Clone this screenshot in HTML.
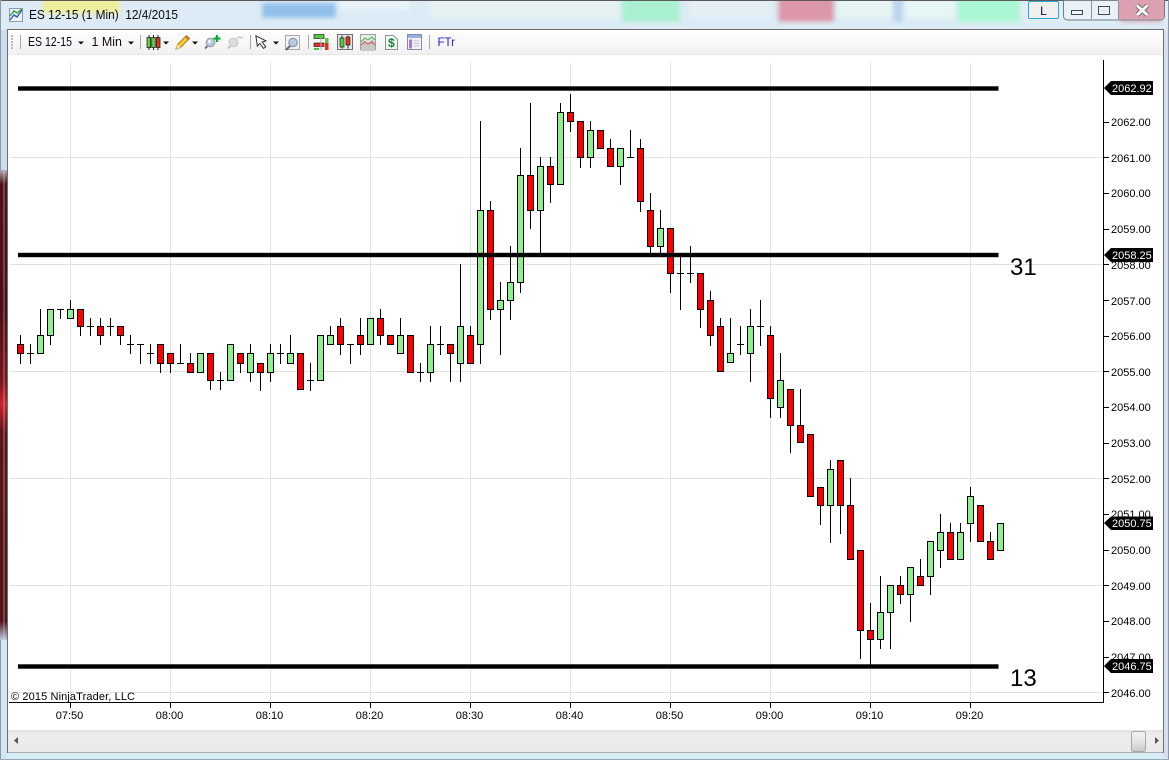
<!DOCTYPE html>
<html><head><meta charset="utf-8"><title>ES 12-15 (1 Min) 12/4/2015</title>
<style>html,body{margin:0;padding:0;background:#dbe9f4}svg{display:block}text{font-family:"Liberation Sans",Arial,sans-serif}</style></head>
<body>
<svg xmlns="http://www.w3.org/2000/svg" width="1169" height="760" viewBox="0 0 1169 760" shape-rendering="crispEdges">
<defs>
<filter id="b" x="-20%" y="-50%" width="140%" height="200%"><feGaussianBlur stdDeviation="2.5"/></filter>
<linearGradient id="tb" x1="0" y1="0" x2="0" y2="1"><stop offset="0" stop-color="#ffffff"/><stop offset="1" stop-color="#f1f1f1"/></linearGradient>
<linearGradient id="red" x1="0" y1="0" x2="0" y2="1"><stop offset="0" stop-color="#b4a8b4"/><stop offset=".03" stop-color="#4e1218"/><stop offset=".3" stop-color="#4a0e14"/><stop offset=".45" stop-color="#7a161c"/><stop offset=".5" stop-color="#c8242c"/><stop offset=".56" stop-color="#5a141a"/><stop offset=".96" stop-color="#521418"/><stop offset="1" stop-color="#b8c8dc"/></linearGradient>
<linearGradient id="thumb" x1="0" y1="0" x2="0" y2="1"><stop offset="0" stop-color="#f4f4f4"/><stop offset=".5" stop-color="#e4e4e4"/><stop offset="1" stop-color="#c8c8c8"/></linearGradient>
<linearGradient id="sb" x1="0" y1="0" x2="0" y2="1"><stop offset="0" stop-color="#e4e4e4"/><stop offset=".2" stop-color="#ededed"/><stop offset="1" stop-color="#eaeaea"/></linearGradient>
</defs>

<!-- glass frame -->
<rect width="1169" height="760" fill="#dbe9f4"/>
<g filter="url(#b)">
<rect x="-5" y="-5" width="1180" height="34" fill="#dcebf5"/>
<rect x="42" y="-4" width="78" height="18" fill="#efee9c"/>
<rect x="262" y="3" width="74" height="15" fill="#8fc0ea"/>
<rect x="340" y="-4" width="70" height="14" fill="#e8f4fa"/>
<rect x="430" y="-4" width="190" height="22" fill="#e6f2f2"/>
<rect x="622" y="-4" width="58" height="26" fill="#a8f0d0"/>
<rect x="690" y="-4" width="80" height="22" fill="#e4eff6"/>
<rect x="778" y="-4" width="56" height="26" fill="#dc97a8"/>
<rect x="838" y="-4" width="54" height="22" fill="#e6f5f3"/>
<rect x="893" y="-4" width="10" height="26" fill="#bcd2ee"/>
<rect x="905" y="-4" width="50" height="22" fill="#e6f6f5"/>
<rect x="958" y="-4" width="62" height="26" fill="#a8f6d2"/>
<rect x="1022" y="-4" width="150" height="24" fill="#e2eef6"/>
<rect x="1120" y="-4" width="42" height="26" fill="#dca0b0"/>
<rect x="-4" y="735" width="1180" height="30" fill="#d8eef6"/>
<rect x="1163" y="30" width="10" height="730" fill="#d8dcf0"/>
</g>
<rect width="1169" height="1" fill="#5a5a5a"/>
<rect x="0" y="0" width="1" height="760" fill="#8a98a8"/>
<rect x="1168" y="0" width="1" height="760" fill="#8a98a8"/>
<rect x="0" y="759" width="1169" height="1" fill="#9aa8b4"/>
<rect x="1" y="30" width="6" height="145" fill="#cddcec"/>
<rect x="1" y="640" width="6" height="119" fill="#d4e6f2"/>
<rect x="0" y="170" width="8" height="470" fill="url(#red)"/>
<rect x="3" y="170" width="2" height="470" fill="#ffffff" opacity=".22"/>

<!-- title -->
<g shape-rendering="geometricPrecision">
<rect x="9.5" y="8.5" width="13" height="13" fill="#eef2f6" stroke="#8a9aac"/>
<path d="M10 20l4-5 3 2 5-7" fill="none" stroke="#2a60c0" stroke-width="1.4"/>
<path d="M10 16l4-5 3 2 5-4" fill="none" stroke="#30a040" stroke-width="1.4"/>
<text x="29" y="19" font-size="13" fill="#0c0c14" textLength="149" lengthAdjust="spacingAndGlyphs" xml:space="preserve">ES 12-15 (1 Min)  12/4/2015</text>

<!-- L button + window buttons -->
<rect x="1028.5" y="1.5" width="30" height="17" rx="1.5" fill="#efefef" stroke="#2ea6d8"/>
<text x="1043.5" y="15" font-size="12" fill="#101040" text-anchor="middle">L</text>
<rect x="1063.5" y="-6" width="101" height="26" rx="4" fill="#ffffff" fill-opacity=".25" stroke="#6f7c88"/>
<path d="M1118 0h46v15a4 4 0 0 1-4 4h-42z" fill="#dca0b0"/>
<path d="M1091.5 1v18M1118.5 1v18" stroke="#8a96a2"/>
<rect x="1071.5" y="10.5" width="11" height="4" fill="#f4f4f4" stroke="#404850"/>
<rect x="1098.5" y="6.5" width="11" height="8" fill="none" stroke="#404850" stroke-width="1"/>
<rect x="1101" y="9" width="6" height="3" fill="#dfe9f2"/>
<path d="M1137 5.500l10.500 9.500M1147.500 5.500l-10.500 9.500" stroke="#5a5a62" stroke-width="4.600"/>
<path d="M1137 5.500l10.500 9.500M1147.500 5.500l-10.500 9.500" stroke="#f6f6f6" stroke-width="3"/>
</g>

<!-- main panel -->
<rect x="7.5" y="29.5" width="1156" height="723" fill="#ffffff" stroke="#6e6e6e"/>
<rect x="8" y="30" width="1155" height="24" rx="2" fill="url(#tb)"/>
<rect x="8" y="54" width="1155" height="1" fill="#e8e8e8"/>

<!-- toolbar -->
<g fill="#b8b8b8"><rect x="11" y="35" width="2" height="2"/><rect x="11" y="38" width="2" height="2"/><rect x="11" y="41" width="2" height="2"/><rect x="11" y="44" width="2" height="2"/><rect x="11" y="47" width="2" height="2"/></g>
<path d="M20.500 35v14M140.500 35v14M250.500 35v14M308.500 35v14M429.500 35v14" stroke="#a8a8a8"/>
<g shape-rendering="geometricPrecision">
<text x="28" y="46" font-size="12.5" fill="#0a0a20" textLength="44" lengthAdjust="spacingAndGlyphs">ES 12-15</text>
<text x="91.500" y="46" font-size="12.5" fill="#1a0a0a" textLength="30.500" lengthAdjust="spacingAndGlyphs">1 Min</text>
<path d="M78 41.500h6l-3 3zM128 41.500h6l-3 3zM163 41.500h6l-3 3zM192 41.500h6l-3 3zM273 41.500h6l-3 3z" fill="#101010"/>

<!-- candles icon -->
<path d="M149 35v15M153.500 35v15M158 35v15" stroke="#222" stroke-width="1"/>
<rect x="147" y="37.500" width="3.600" height="10" fill="#60d040" stroke="#222" stroke-width=".8"/>
<rect x="151.700" y="37.500" width="3.600" height="10" fill="#60d040" stroke="#222" stroke-width=".8"/>
<rect x="156.400" y="37.500" width="3.600" height="10" fill="#e83020" stroke="#222" stroke-width=".8"/>

<!-- pencil -->
<path d="M176 49l1.500-4.500 9-9 3 3-9 9z" fill="#f2cc30" stroke="#a87818" stroke-width=".9"/>
<path d="M176 49l1.500-4.500 3 3z" fill="#f4e0b0"/>
<path d="M185.500 36.500l3 3" stroke="#d06040" stroke-width="1.500"/>

<!-- zoom in -->
<path d="M205 48.500l3.500-3.500" stroke="#707880" stroke-width="2"/>
<circle cx="210.500" cy="42.500" r="4.200" fill="#b8cce0" stroke="#a0a8b0" stroke-width="1.400"/>
<circle cx="209.500" cy="41.500" r="1.600" fill="#eef6ff"/>
<path d="M217 35v7M213.500 38.500h7" stroke="#10a838" stroke-width="2.200"/>

<!-- zoom out -->
<path d="M228 48.500l3.500-3.500" stroke="#c0c0c0" stroke-width="2"/>
<circle cx="233.500" cy="42.500" r="4.200" fill="#dedede" stroke="#cccccc" stroke-width="1.400"/>
<path d="M237 37.500h6" stroke="#d0d0d0" stroke-width="2"/>

<!-- cursor -->
<path d="M256.500 35.500v10.500l2.800-2.400 3 5.500 2.500-1.300-3-5.200 4-.6z" transform="rotate(-8 258 40)" fill="#fff" stroke="#333" stroke-width="1"/>

<!-- magnifier box -->
<rect x="285.500" y="35.500" width="14" height="14" fill="#f2f2f2" stroke="#a8a8a8"/>
<path d="M286 50l4-4" stroke="#606870" stroke-width="2"/>
<circle cx="293" cy="42.500" r="4.200" fill="#b4cce4" stroke="#8a98a8" stroke-width="1.200"/>

<!-- icon levels -->
<rect x="314" y="34.500" width="10" height="4" fill="#50d040" stroke="#222" stroke-width=".7"/>
<rect x="314" y="43" width="10" height="3.500" fill="#e83020" stroke="#222" stroke-width=".7"/>
<rect x="325" y="38" width="3.500" height="5" fill="#60c050"/>
<rect x="325" y="43" width="3.500" height="7" fill="#e03020"/>
<path d="M321 38v12" stroke="#b0b0b0" stroke-width="1"/>
<rect x="314" y="48" width="5" height="2" fill="#50c040"/>

<!-- icon candles in box -->
<rect x="337.500" y="34.500" width="15" height="15" fill="#e8e8e8" stroke="#707070"/>
<path d="M342 35.500v13M348 35.500v13" stroke="#222"/>
<rect x="340" y="38" width="4" height="9" fill="#50d040" stroke="#222" stroke-width=".7"/>
<rect x="346" y="37" width="4" height="8" fill="#e83020" stroke="#222" stroke-width=".7"/>

<!-- icon indicator -->
<rect x="360.500" y="34.500" width="15" height="15" fill="#e8ece8" stroke="#a0a0a0"/>
<path d="M361 44l4-4 3 3 4-4 3 3v9h-14z" fill="#c8c8c8"/>
<path d="M361 42l4-4 3 2 4-3 3 3" fill="none" stroke="#40b050" stroke-width="1"/>
<path d="M361 45l4-3 3 2 4-2 3 3" fill="none" stroke="#d85050" stroke-width="1"/>

<!-- icon $ page -->
<path d="M385.500 35.500h8l4 4v10h-12z" fill="#f6f6f6" stroke="#909090" stroke-width="1"/>
<text x="391.300" y="47" font-size="12" font-weight="bold" fill="#0a8a30" text-anchor="middle">$</text>

<!-- icon window -->
<rect x="407.500" y="34.500" width="14" height="15" fill="#f4f4f8" stroke="#8a8aa8"/>
<rect x="408" y="35" width="13" height="3" fill="#8fb4e0"/>
<rect x="409" y="39.500" width="3" height="9" fill="#a878d8"/>
<path d="M413.500 41h6M413.500 43.500h6M413.500 46h6" stroke="#c0c0c0" stroke-width="1"/>

<text x="437.500" y="46" font-size="12" fill="#2020d8" textLength="17.500" lengthAdjust="spacingAndGlyphs">FTr</text>
</g>

<!-- grid -->
<path d="M70.500 63V702M170.500 63V702M270.500 63V702M370.500 63V702M470.500 63V702M570.500 63V702M670.500 63V702M770.500 63V702M870.500 63V702M970.500 63V702" stroke="#e2e2e2"/>
<path d="M10 157.500H1103M10 264.500H1103M10 371.500H1103M10 478.500H1103M10 585.500H1103M10 692.500H1103" stroke="#e2e2e2"/>

<!-- axes -->
<path d="M1103.500 60V702.500M9 702.500H1104" stroke="#000"/>
<path d="M70.500 703v5M170.500 703v5M270.500 703v5M370.500 703v5M470.500 703v5M570.500 703v5M670.500 703v5M770.500 703v5M870.500 703v5M970.500 703v5" stroke="#000"/>
<path d="M1104 122.500h5M1104 157.500h5M1104 193.500h5M1104 229.500h5M1104 264.500h5M1104 300.500h5M1104 336.500h5M1104 371.500h5M1104 407.500h5M1104 443.500h5M1104 478.500h5M1104 514.500h5M1104 550.500h5M1104 585.500h5M1104 621.500h5M1104 657.500h5M1104 692.500h5" stroke="#000"/>

<!-- wicks and dojis -->
<path fill="none" stroke="#000" d="M20.500 335V364M30.500 344V364M27 353.500H34M40.500 309V354M50.500 309V345M60.500 309V319M57 309.500H64M70.500 300V319M80.500 309V336M90.500 318V336M87 326.500H94M100.500 318V345M110.500 318V336M107 326.500H114M120.500 326V345M130.500 335V354M127 344.500H134M140.500 344V364M137 344.500H144M150.500 344V364M147 353.500H154M160.500 344V373M170.500 353V373M180.500 344V364M177 363.500H184M190.500 353V373M210.500 353V390M220.500 372V390M217 380.500H224M240.500 353V373M250.500 344V382M260.500 363V391M270.500 344V382M280.500 344V364M277 353.500H284M290.500 335V364M310.500 363V391M307 380.500H314M330.500 326V345M340.500 318V355M350.500 344V364M347 344.500H354M360.500 318V355M380.500 309V345M400.500 318V354M420.500 363V382M417 372.500H424M430.500 326V382M440.500 326V355M437 344.500H444M450.500 344V382M460.500 264V382M470.500 326V364M480.500 121V364M490.500 201V320M500.500 282V355M510.500 246V320M520.500 148V293M530.500 103V229M540.500 157V256M550.500 157V203M560.500 103V185M570.500 94V132M580.500 121V168M590.500 121V168M610.500 139V167M620.500 148V185M630.500 130V158M627 157.500H634M640.500 139V212M650.500 193V254M660.500 210V254M670.500 228V293M680.500 255V310M677 273.500H684M690.500 246V283M687 273.500H694M700.500 273V328M710.500 291V346M720.500 318V372M730.500 318V363M740.500 326V355M737 344.500H744M750.500 309V382M760.500 300V346M757 326.500H764M770.500 326V418M780.500 353V418M790.500 389V453M800.500 389V443M820.500 487V525M830.500 460V543M840.500 460V534M850.500 478V560M860.500 550V659M870.500 603V666M880.500 576V649M890.500 585V649M900.500 576V604M910.500 567V622M920.500 559V586M930.500 541V595M940.500 514V568M950.500 523V560M960.500 523V560M970.500 487V542M990.500 532V560"/>

<!-- red bodies -->
<path fill="#ff0000" stroke="#000" d="M17.500 344.500h6v9h-6zM77.500 309.500h6v17h-6zM97.500 326.500h6v9h-6zM117.500 326.500h6v9h-6zM157.500 344.500h6v19h-6zM167.500 353.500h6v10h-6zM187.500 363.500h6v9h-6zM207.500 353.500h6v27h-6zM237.500 353.500h6v10h-6zM257.500 363.500h6v9h-6zM297.500 353.500h6v36h-6zM337.500 326.500h6v18h-6zM357.500 335.500h6v9h-6zM377.500 318.500h6v17h-6zM387.500 335.500h6v9h-6zM407.500 335.500h6v37h-6zM447.500 344.500h6v9h-6zM467.500 335.500h6v28h-6zM487.500 210.500h6v99h-6zM527.500 175.500h6v35h-6zM547.500 166.500h6v18h-6zM567.500 112.500h6v9h-6zM577.500 121.500h6v36h-6zM597.500 130.500h6v18h-6zM607.500 148.500h6v18h-6zM637.500 148.500h6v53h-6zM647.500 210.500h6v36h-6zM667.500 228.500h6v45h-6zM697.500 273.500h6v36h-6zM707.500 300.500h6v35h-6zM717.500 326.500h6v45h-6zM767.500 335.500h6v63h-6zM787.500 389.500h6v36h-6zM797.500 425.500h6v17h-6zM807.500 434.500h6v62h-6zM817.500 487.500h6v18h-6zM837.500 460.500h6v45h-6zM847.500 505.500h6v54h-6zM857.500 550.500h6v80h-6zM867.500 630.500h6v9h-6zM897.500 585.500h6v9h-6zM917.500 576.500h6v9h-6zM947.500 532.500h6v27h-6zM977.500 505.500h6v36h-6zM987.500 541.500h6v18h-6z"/>

<!-- green bodies -->
<path fill="#90ee90" stroke="#000" d="M37.500 335.500h6v18h-6zM47.500 309.500h6v26h-6zM67.500 309.500h6v9h-6zM197.500 353.500h6v19h-6zM227.500 344.500h6v36h-6zM247.500 353.500h6v19h-6zM267.500 353.500h6v19h-6zM287.500 353.500h6v10h-6zM317.500 335.500h6v45h-6zM327.500 335.500h6v9h-6zM367.500 318.500h6v26h-6zM397.500 335.500h6v18h-6zM427.500 344.500h6v28h-6zM457.500 326.500h6v37h-6zM477.500 210.500h6v134h-6zM497.500 300.500h6v9h-6zM507.500 282.500h6v18h-6zM517.500 175.500h6v107h-6zM537.500 166.500h6v44h-6zM557.500 112.500h6v72h-6zM587.500 130.500h6v27h-6zM617.500 148.500h6v18h-6zM657.500 228.500h6v18h-6zM727.500 353.500h6v9h-6zM747.500 326.500h6v27h-6zM777.500 380.500h6v27h-6zM827.500 469.500h6v36h-6zM877.500 612.500h6v27h-6zM887.500 585.500h6v27h-6zM907.500 567.500h6v27h-6zM927.500 541.500h6v35h-6zM937.500 532.500h6v18h-6zM957.500 532.500h6v27h-6zM967.500 496.500h6v27h-6zM997.500 523.500h6v27h-6z"/>

<!-- horizontal drawn lines -->
<g shape-rendering="geometricPrecision" fill="#000">
<rect x="18" y="86.300" width="980.500" height="4.400"/>
<rect x="18" y="252.800" width="980.500" height="4.400"/>
<rect x="18" y="664.300" width="980.500" height="4.400"/>
</g>

<g shape-rendering="geometricPrecision">
<text x="1010" y="275" font-size="24" fill="#000">31</text>
<text x="1010" y="686" font-size="24" fill="#000">13</text>

<text x="11" y="700" font-size="11" fill="#000" textLength="124">© 2015 NinjaTrader, LLC</text>

<g font-size="11" fill="#000" text-anchor="middle">
<text x="69.500" y="719">07:50</text><text x="169.500" y="719">08:00</text><text x="269.500" y="719">08:10</text><text x="369.500" y="719">08:20</text><text x="469.500" y="719">08:30</text><text x="569.500" y="719">08:40</text><text x="669.500" y="719">08:50</text><text x="769.500" y="719">09:00</text><text x="869.500" y="719">09:10</text><text x="969.500" y="719">09:20</text>
</g>

<g font-size="11" fill="#000">
<text x="1111" y="126">2062.00</text><text x="1111" y="162">2061.00</text><text x="1111" y="197">2060.00</text><text x="1111" y="233">2059.00</text><text x="1111" y="269">2058.00</text><text x="1111" y="305">2057.00</text><text x="1111" y="340">2056.00</text><text x="1111" y="376">2055.00</text><text x="1111" y="411">2054.00</text><text x="1111" y="447">2053.00</text><text x="1111" y="483">2052.00</text><text x="1111" y="518">2051.00</text><text x="1111" y="554">2050.00</text><text x="1111" y="590">2049.00</text><text x="1111" y="625">2048.00</text><text x="1111" y="661">2047.00</text><text x="1111" y="697">2046.00</text>
</g>

<!-- price tags -->
<path fill="#000" d="M1104 88l7-7h42v14h-42zM1104 255l7-7h42v14h-42zM1104 523l7-6.500h42v13.500h-42zM1104 666l7-7h42v14h-42z"/>
<g font-size="11" fill="#fff">
<text x="1112" y="92">2062.92</text>
<text x="1112" y="259">2058.25</text>
<text x="1112" y="527">2050.75</text>
<text x="1112" y="670">2046.75</text>
</g>

<!-- scrollbar -->
<rect x="8" y="730" width="1155" height="22.500" fill="url(#sb)"/>
<path d="M18 737v7l-4-3.500z" fill="#555"/>
<path d="M1155 737v7l4-3.500z" fill="#555"/>
<rect x="1131.500" y="731.500" width="14" height="20" rx="2" fill="url(#thumb)" stroke="#a8a8a8"/>
</g>
</svg>
</body></html>
